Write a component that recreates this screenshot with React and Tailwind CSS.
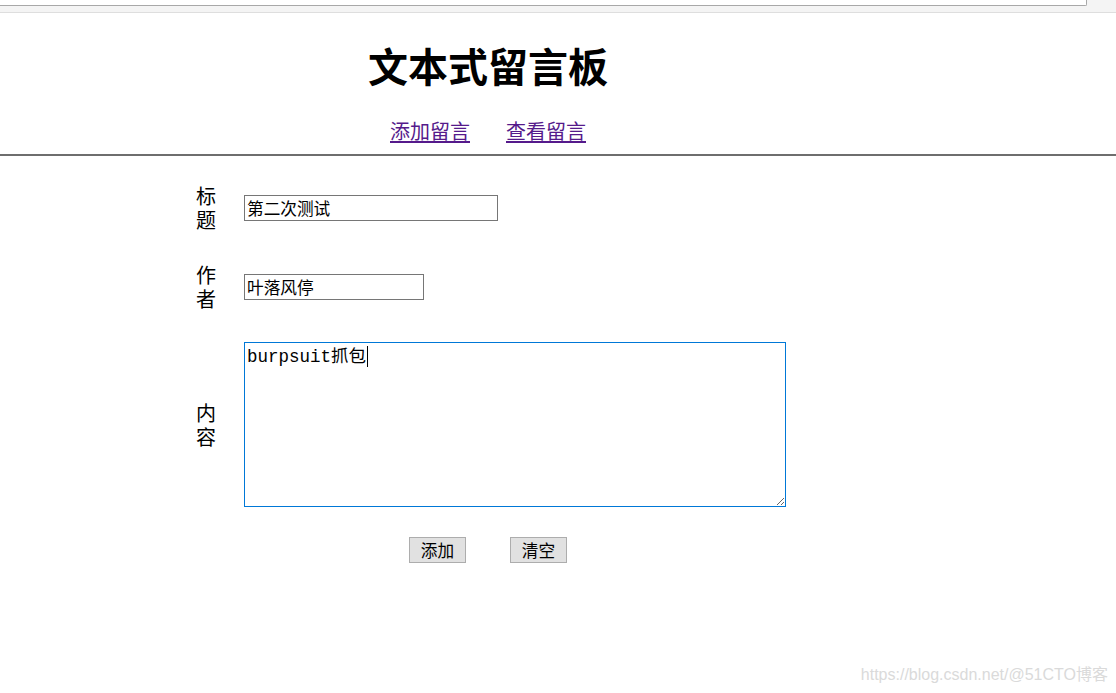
const FIELDS = [
  { label: ["标", "题"], value: "第二次测试", width: "w-[254px]" },
  { label: ["作", "者"], value: "叶落风停", width: "w-[180px]" },
];

function Label({ chars }) {
  return (
    <div className="w-[48px] shrink-0 text-[20px] leading-[24px] text-black">
      {chars.map((c) => (
        <div key={c}>{c}</div>
      ))}
    </div>
  );
}

export default function App() {
  return (
    <div
      className="relative min-h-[693px] w-[1116px] bg-white overflow-hidden"
      style={{ fontFamily: '"Noto Sans CJK SC", "Liberation Sans", sans-serif' }}
    >
      {/* browser chrome leftover */}
      <div className="h-[13px] bg-[#f4f4f4] border-b border-[#dedede]">
        <div className="h-[6px] w-[1087px] bg-white border-b border-r border-[#a8a8a8] rounded-br-[2px]" />
      </div>

      {/* header */}
      <div className="w-[976px] text-center">
        <h1 className="mt-[28px] text-[40px] leading-[48px] font-bold text-black">文本式留言板</h1>
        <div className="mt-[28px] flex justify-center gap-[36px] text-[20px] leading-[28px]">
          <a href="#" className="text-[#551a8b] underline underline-offset-2">添加留言</a>
          <a href="#" className="text-[#551a8b] underline underline-offset-2">查看留言</a>
        </div>
      </div>
      <div className="mt-[9px] border-t-2 border-[#6e6e6e]" />

      {/* form */}
      <form className="pl-[196px] pt-[28px] flex flex-col gap-[31px]">
        {FIELDS.map((f) => (
          <div key={f.value} className="flex items-center h-[48px]">
            <Label chars={f.label} />
            <input
              defaultValue={f.value}
              className={`${f.width} h-[26px] border border-[#767676] px-[2px] text-[16.67px] text-black outline-none`}
            />
          </div>
        ))}
        <div className="flex items-center">
          <Label chars={["内", "容"]} />
          <div className="relative">
            <textarea
              defaultValue="burpsuit抓包"
              className="block w-[542px] h-[165px] border border-[#0078d7] px-[2px] pt-[2px] text-[17.5px] leading-[24px] text-black outline-none"
              style={{ fontFamily: '"Liberation Mono", "Noto Sans CJK SC", monospace' }}
            />
            {/* caret */}
            <div className="absolute left-[123px] top-[4px] w-px h-[21px] bg-black" />
          </div>
        </div>
        <div className="flex -mt-[1px] pl-[213px] gap-[44px]">
          <button type="button" className="w-[57px] h-[26px] bg-[#e1e1e1] border border-[#adadad] text-[16.67px] leading-[22px] text-black">
            添加
          </button>
          <button type="button" className="w-[57px] h-[26px] bg-[#e1e1e1] border border-[#adadad] text-[16.67px] leading-[22px] text-black">
            清空
          </button>
        </div>
      </form>

      {/* watermark */}
      <div
        className="absolute right-[8px] bottom-[6px] text-[16px] text-[#dadada]"
        style={{ fontFamily: '"Liberation Sans", "Noto Sans CJK SC", sans-serif' }}
      >
        https://blog.csdn.net/@51CTO博客
      </div>
    </div>
  );
}
